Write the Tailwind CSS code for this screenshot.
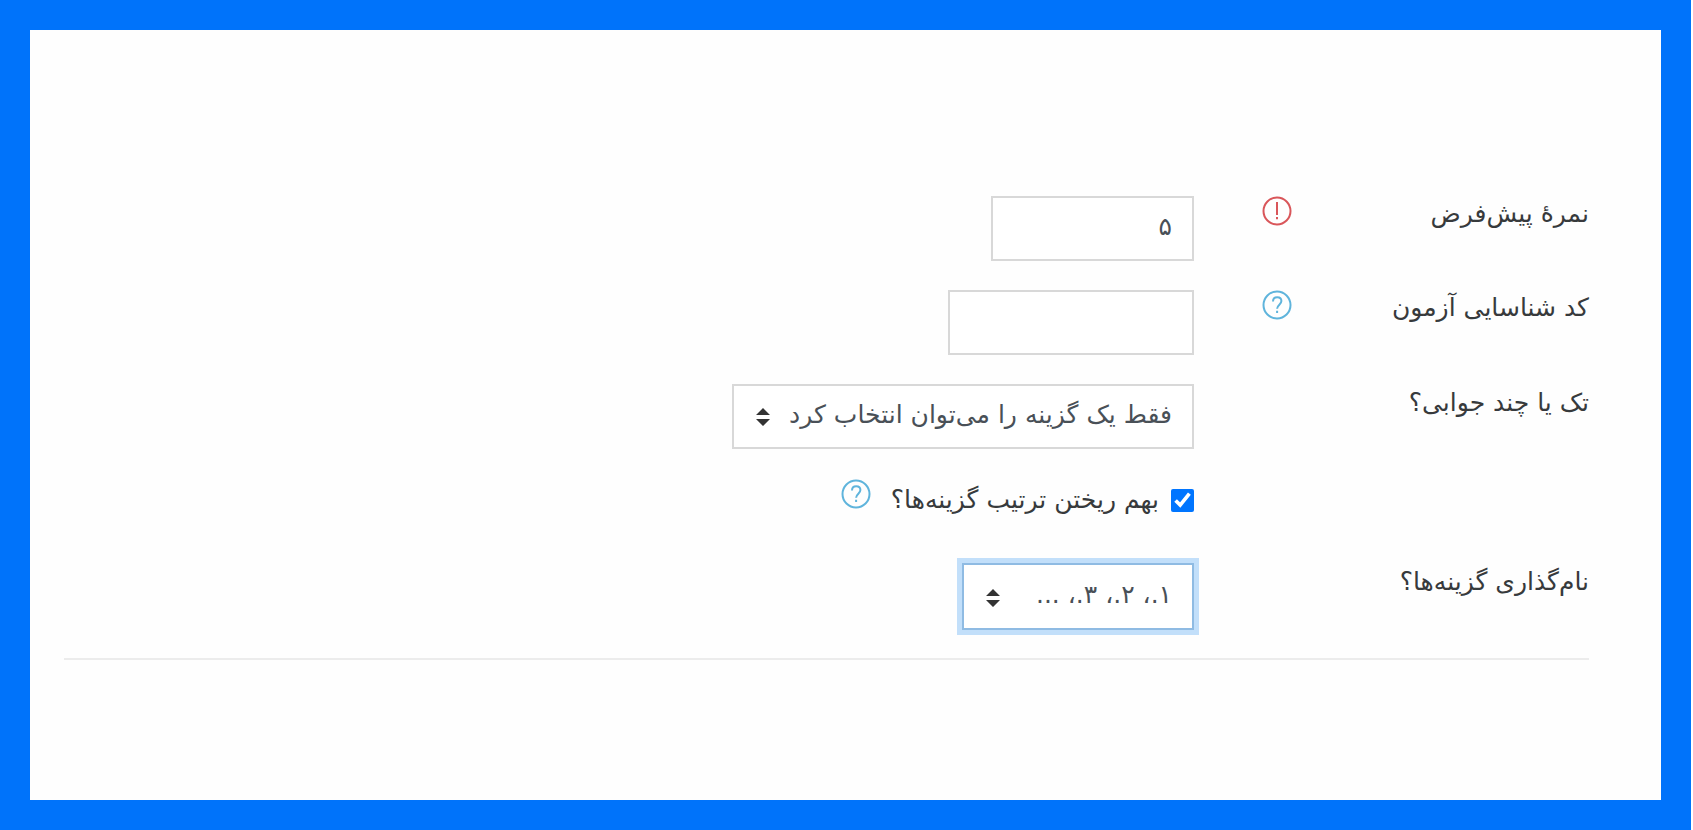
<!DOCTYPE html>
<html lang="fa" dir="rtl">
<head>
    <meta charset="UTF-8">
    <meta name="viewport" content="width=device-width, initial-scale=1.0">
    <title>تنظیمات سؤال</title>
    <script src="https://cdn.jsdelivr.net/npm/@tailwindcss/browser@4"></script>
</head>
<body class="bg-white font-['DejaVu_Sans',sans-serif] text-[25px] text-[#373a3c]">
    <!-- Blue frame -->
    <div class="min-h-screen mr-[2px] p-[30px] bg-[#0073fa] flex">
        <main class="flex-1 bg-[#fefefe] pt-[166px] pr-[72px] pl-[34px]">
            <form>
                <div class="flex flex-col gap-[29px] pb-7 border-b-2 border-[#ececec]">
                    <!-- Default mark -->
                    <div class="flex h-[65px]">
                        <div class="w-[25.9%] pl-[68px] flex items-start justify-between">
                            <label for="mark" class="leading-9">نمرهٔ پیش‌فرض</label>
                            <button type="button" aria-label="required" class="text-[#d9565a]">
                                <svg class="size-[30px]" viewBox="0 0 30 30" fill="none" stroke="currentColor" stroke-width="2">
                                    <circle cx="15" cy="15" r="13.5"/>
                                    <path d="M15 6v13M15 21v2.200"/>
                                </svg>
                            </button>
                        </div>
                        <input id="mark" type="text" value="۵" class="w-[203px] h-[65px] px-5 pb-1 bg-white border-2 border-[#d8d8d8] text-[#495057]">
                    </div>

                    <!-- ID number -->
                    <div class="flex h-[65px]">
                        <div class="w-[25.9%] pl-[68px] flex items-start justify-between">
                            <label for="idnumber" class="leading-9">کد شناسایی آزمون</label>
                            <button type="button" aria-label="help" class="text-[#5fb4dc]">
                                <svg class="size-[30px]" viewBox="0 0 30 30" fill="none" stroke="currentColor" stroke-width="2">
                                    <circle cx="15" cy="15" r="13.5"/>
                                    <path d="M11 11.500c0-2.600 1.700-4.200 4.200-4.200s4.200 1.500 4.200 3.800c0 3.400-4.300 3.800-4.300 7.700M15.100 20.800v2.300"/>
                                </svg>
                            </button>
                        </div>
                        <input id="idnumber" type="text" class="w-[246px] h-[65px] px-5 bg-white border-2 border-[#d8d8d8] text-[#495057]">
                    </div>

                    <!-- One or multiple answers -->
                    <div class="flex h-[65px]">
                        <div class="w-[25.9%]">
                            <label for="single" class="leading-9">تک یا چند جوابی؟</label>
                        </div>
                        <div class="relative w-[462px]">
                            <select id="single" class="appearance-none w-full h-[65px] pr-5 pl-[50px] pb-1 bg-white border-2 border-[#d8d8d8] text-[#495057]">
                                <option>فقط یک گزینه را می‌توان انتخاب کرد</option>
                                <option>چند گزینه را می‌توان انتخاب کرد</option>
                            </select>
                            <svg class="absolute left-6 top-6 w-[14px] h-[18px] pointer-events-none" viewBox="0 0 14 18" fill="#333"><path d="M7 0l7 7H0zM7 18l7-7H0z"/></svg>
                        </div>
                    </div>

                    <!-- Shuffle -->
                    <div class="flex h-14 pr-[25.9%]">
                        <div class="flex items-start">
                            <label class="flex items-center gap-3 leading-[44px]">
                                <input type="checkbox" checked class="size-[23px] accent-[#0075ff]">
                                بهم ریختن ترتیب گزینه‌ها؟
                            </label>
                            <button type="button" aria-label="help" class="mr-5 mt-px text-[#5fb4dc]">
                                <svg class="size-[30px]" viewBox="0 0 30 30" fill="none" stroke="currentColor" stroke-width="2">
                                    <circle cx="15" cy="15" r="13.5"/>
                                    <path d="M11 11.500c0-2.600 1.700-4.200 4.200-4.200s4.200 1.500 4.200 3.800c0 3.400-4.300 3.800-4.300 7.700M15.100 20.800v2.300"/>
                                </svg>
                            </button>
                        </div>
                    </div>

                    <!-- Answer numbering -->
                    <div class="flex h-[67px]">
                        <div class="w-[25.9%]">
                            <label for="numbering" class="leading-9">نام‌گذاری گزینه‌ها؟</label>
                        </div>
                        <div class="relative w-[232px]">
                            <select id="numbering" class="appearance-none w-full h-[67px] pr-5 pl-[50px] pb-1 bg-white border-2 border-[#8fbbe3] ring-[5px] ring-[#c2dffa] text-[#495057]">
                                <option>۱.، ۲.، ۳.، ...</option>
                                <option>a.، b.، c.، ...</option>
                            </select>
                            <svg class="absolute left-6 top-[26px] w-[14px] h-[18px] pointer-events-none" viewBox="0 0 14 18" fill="#333"><path d="M7 0l7 7H0zM7 18l7-7H0z"/></svg>
                        </div>
                    </div>
                </div>
            </form>
        </main>
    </div>
</body>
</html>
